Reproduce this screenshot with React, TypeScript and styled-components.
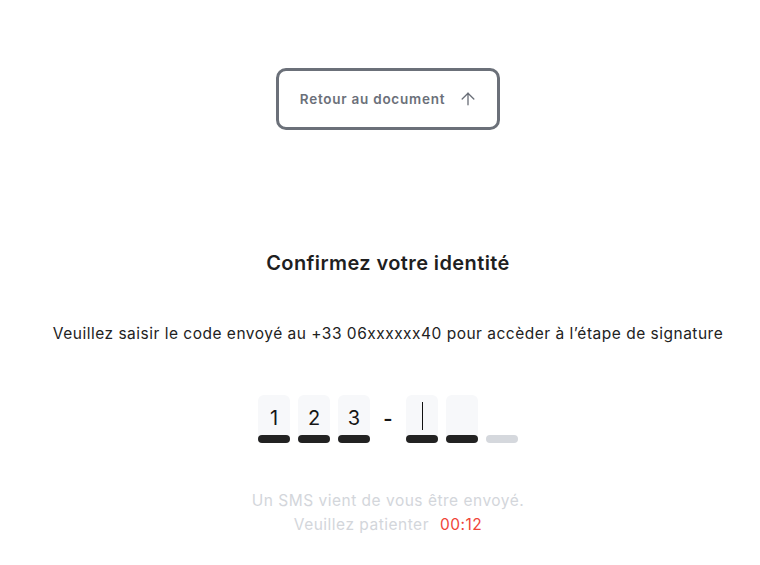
import React from 'react'
import styled, { createGlobalStyle } from 'styled-components'
import { ArrowUp } from 'lucide-react'

const GlobalStyle = createGlobalStyle`
  html, body {
    margin: 0;
    padding: 0;
    background: #ffffff;
  }
  body {
    font-family: Inter, "Noto Sans", sans-serif;
    color: #222222;
  }
`

const Page = styled.main`
  box-sizing: border-box;
  width: 100%;
  min-height: 565px;
  padding: 68px 0 0 16px;
  display: flex;
  flex-direction: column;
  align-items: center;
`

const BackButton = styled.button`
  box-sizing: border-box;
  width: 224px;
  height: 62px;
  border: 3px solid #6b7079;
  border-radius: 10px;
  background: #ffffff;
  display: flex;
  align-items: center;
  justify-content: center;
  gap: 13px;
  padding: 0 0 0 2px;
  font-family: inherit;
  font-size: 13.5px;
  letter-spacing: 0.75px;
  font-weight: 600;
  color: #6b7079;
  cursor: pointer;
`

const Title = styled.h1`
  margin: 119px 0 0;
  font-size: 20px;
  letter-spacing: 0.4px;
  line-height: 28px;
  font-weight: 600;
  color: #1f1f1f;
`

const Intro = styled.p`
  margin: 45px 0 0;
  font-size: 15.5px;
  letter-spacing: 0.5px;
  line-height: 24px;
  color: #222222;
`

const CodeRow = styled.div`
  margin-top: 49px;
  display: flex;
  align-items: flex-start;
  gap: 8px;
`

const Cell = styled.div<{ empty?: boolean }>`
  width: 32px;
  height: 48px;
  border-radius: 6px 6px 4px 4px;
  background: ${p => (p.empty ? 'transparent' : '#f7f8fa')};
  display: flex;
  flex-direction: column;
  align-items: center;
`

const Digit = styled.span`
  flex: 1;
  display: flex;
  align-items: center;
  justify-content: center;
  padding-top: 6px;
  font-size: 20px;
  font-weight: 400;
  color: #161616;
`

const Caret = styled.span`
  display: block;
  width: 1px;
  height: 28px;
  margin-bottom: 4px;
  background: #111111;
`

const Bar = styled.span<{ muted?: boolean }>`
  width: 32px;
  height: 8px;
  border-radius: 4px;
  background: ${p => (p.muted ? '#d5d8dd' : '#222222')};
`

const Separator = styled.span`
  width: 20px;
  height: 48px;
  display: flex;
  align-items: center;
  justify-content: center;
  font-size: 20px;
  font-weight: 600;
  color: #161616;
`

const Notice = styled.p`
  margin: 46px 0 0;
  text-align: center;
  font-size: 15.5px;
  letter-spacing: 0.5px;
  line-height: 24px;
  color: #d3d6db;
`

const Timer = styled.span`
  margin-left: 11px;
  color: #f04438;
`

const digits = ['1', '2', '3', '', '', '']

export default function App() {
  return (
    <>
      <GlobalStyle />
      <Page>
        <BackButton>
          Retour au document
          <ArrowUp size={20} strokeWidth={1.6} />
        </BackButton>
        <Title>Confirmez votre identité</Title>
        <Intro>
          Veuillez saisir le code envoyé au +33 06xxxxxx40 pour accèder à l’étape de signature
        </Intro>
        <CodeRow>
          {digits.map((d, i) => (
            <React.Fragment key={i}>
              {i === 3 && <Separator>-</Separator>}
              <Cell empty={i === 5}>
                <Digit>{i === 3 ? <Caret /> : d}</Digit>
                <Bar muted={i === 5} />
              </Cell>
            </React.Fragment>
          ))}
        </CodeRow>
        <Notice>
          Un SMS vient de vous être envoyé.
          <br />
          Veuillez patienter
          <Timer>00:12</Timer>
        </Notice>
      </Page>
    </>
  )
}
